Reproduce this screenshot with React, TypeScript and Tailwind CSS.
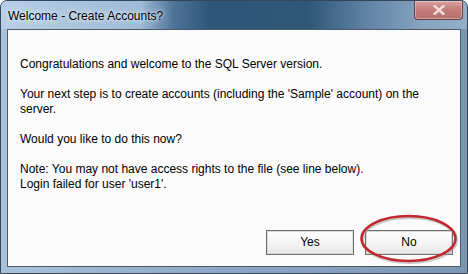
import React from 'react';

const font = { fontFamily: '"Liberation Sans", Arial, sans-serif' };

function CloseButton() {
  return (
    <div className="absolute left-[414px] top-[1px] w-[49px] h-[19px] rounded-b-[4px] border border-t-0 border-[#6b3f42] bg-gradient-to-b from-[#d9a2a0] via-[#c27a78] to-[#b5706e] flex items-center justify-center shadow-[inset_0_0_0_1px_rgba(255,255,255,0.35)]">
      <svg width="12" height="10" viewBox="0 0 12 10">
        <path d="M1.5 1 L10.5 9 M10.5 1 L1.5 9" stroke="#f3dcdc" strokeWidth="2.4" strokeLinecap="square" />
      </svg>
    </div>
  );
}

function GlassBackground() {
  // Aero glass streak behind the caption
  return (
    <svg className="absolute inset-0" width="466" height="28" preserveAspectRatio="none">
      <defs>
        <linearGradient id="glass" x1="0" y1="0" x2="1" y2="0">
          <stop offset="0" stopColor="#b7cfe7" />
          <stop offset="0.3" stopColor="#9fbad6" />
          <stop offset="0.37" stopColor="#4f7398" />
          <stop offset="0.45" stopColor="#2e5577" />
          <stop offset="0.66" stopColor="#305778" />
          <stop offset="0.78" stopColor="#5f81a3" />
          <stop offset="0.9" stopColor="#86a3c0" />
          <stop offset="1" stopColor="#93aecb" />
        </linearGradient>
      </defs>
      <rect width="466" height="28" fill="url(#glass)" />
    </svg>
  );
}

function DialogButton({ label }: { label: string }) {
  return (
    <button
      className="w-[88px] h-[25px] border border-[#707070] bg-gradient-to-b from-[#ffffff] via-[#f6f6f6] to-[#e6e6e6] text-[12px] text-black shadow-[inset_0_0_0_1px_#d8d8d8]"
      style={font}
    >
      {label}
    </button>
  );
}

export default function App() {
  return (
    <div className="relative w-[468px] h-[274px] bg-white overflow-hidden" style={font}>
      <div className="w-full h-full rounded-t-[7px] border border-[#34475a] bg-gradient-to-r from-[#a9c2dc] via-[#8aa7c5] to-[#7b97b5] flex flex-col overflow-hidden">
        <div className="relative h-[28px] shrink-0 flex items-center pl-[7px]">
          <GlassBackground />
          <span className="relative text-[12px] text-black pt-[1px] [text-shadow:0_0_6px_#e6f0fa,0_0_3px_#e6f0fa]">
            Welcome - Create Accounts?
          </span>
        </div>
        <div className="flex-1 flex flex-col mx-[6px] mb-[6px] border border-[#4a5b6b] bg-[#fbfbfb] pl-[12px] pr-[7px] pt-[27px] pb-[11px] text-[12px] leading-[15px] text-black">
          <p>Congratulations and welcome to the SQL Server version.</p>
          <p className="mt-[15px]">
            Your next step is to create accounts (including the 'Sample' account) on the
            <br />
            server.
          </p>
          <p className="mt-[15px]">Would you like to do this now?</p>
          <p className="mt-[15px]">
            Note: You may not have access rights to the file (see line below).
            <br />
            Login failed for user 'user1'.
          </p>
          <div className="mt-auto flex justify-end gap-[11px]">
            <DialogButton label="Yes" />
            <DialogButton label="No" />
          </div>
        </div>
      </div>
      <CloseButton />
      <svg className="absolute left-0 top-0 pointer-events-none" width="468" height="274">
        <ellipse cx="409.5" cy="240" rx="47" ry="22.5" fill="none" stroke="#9a9a9a" strokeOpacity="0.5" strokeWidth="3" />
        <ellipse cx="408.5" cy="238.5" rx="47" ry="22.5" fill="none" stroke="#c1272d" strokeWidth="2.5" />
      </svg>
    </div>
  );
}
